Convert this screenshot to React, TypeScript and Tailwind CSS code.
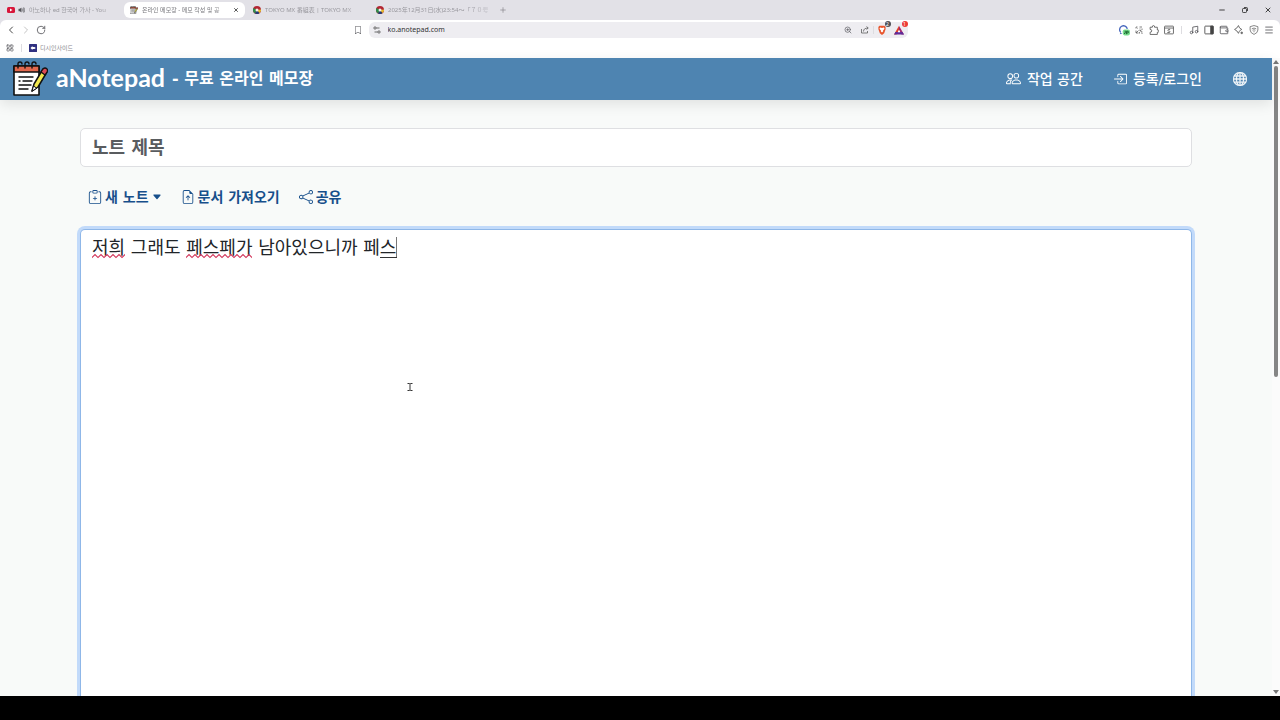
import type { ReactNode } from "react";
import {
  BsBoxArrowInRight,
  BsBookmark,
  BsCaretDownFill,
  BsClipboardPlus,
  BsFileEarmarkArrowUp,
  BsGlobe,
  BsPeople,
  BsShare,
  BsVolumeUpFill,
} from "react-icons/bs";
import {
  ChevronLeft,
  ChevronRight,
  LayoutGrid,
  Menu,
  Minus,
  Music,
  Plus,
  RotateCw,
  Wallet,
  X,
  ZoomIn,
} from "lucide-react";

function YouTubeIcon() {
  return (
    <svg viewBox="0 0 16 12" className="h-1.5 w-2 shrink-0">
      <rect width="16" height="12" rx="3" fill="#d8163a" />
      <path d="M6 3l5 3-5 3z" fill="#fff" />
    </svg>
  );
}

function TokyoIcon() {
  return (
    <svg viewBox="0 0 16 16" className="size-2 shrink-0">
      <circle cx="8" cy="8" r="8" fill="#b32734" />
      <path d="M8 8L1 4A8 8 0 0 0 4 15z" fill="#2c8b4b" />
      <path d="M8 8l-4 7a8 8 0 0 0 9-1z" fill="#1e3d78" />
      <path d="M8 8l5 6a8 8 0 0 0 3-7z" fill="#e4bb2c" />
      <circle cx="8" cy="8" r="3" fill="#f5f1e8" />
    </svg>
  );
}

function NotepadIcon({ className }: { className: string }) {
  return (
    <svg viewBox="0 0 36 36" className={className} fill="none" stroke="#111" strokeLinecap="round" strokeLinejoin="round">
      <path d="M2 5h25v29H2z" fill="#fff" strokeWidth="1.6" />
      <path d="M2 5h25v6H2z" fill="#e2684d" strokeWidth="1.6" />
      <path d="M6 7V3q0-2 2-2t2 2M13 7V3q0-2 2-2t2 2M20 7V3q0-2 2-2t2 2" strokeWidth="1.4" />
      <path d="M7 16h14M11 20h9M7 20h1M7 24h12M7 28h9" strokeWidth="1.4" />
      <path d="M20 30l2-7 9-15 4 3-9 15z" fill="#f3e94e" strokeWidth="1.5" />
      <path d="M29 11l2-3q2-2 4 0 1 1 0 3l-2 3z" fill="#de4a55" strokeWidth="1.3" />
      <path d="M20 30l1.500-5 3 2z" fill="#fff" strokeWidth="1" />
    </svg>
  );
}

function SiteControlsIcon() {
  return (
    <svg viewBox="0 0 16 16" className="size-2 shrink-0" fill="none" stroke="#555" strokeWidth="1.700">
      <circle cx="4" cy="4" r="2.300" />
      <path d="M6.500 4H13M3 12h6.500" />
      <circle cx="12" cy="12" r="2.300" />
    </svg>
  );
}

function ShareIcon() {
  return (
    <svg viewBox="0 0 16 16" className="size-2" fill="none" stroke="#555" strokeWidth="1.500">
      <path d="M1 6v8h12v-4M5 11q0-7 9-7M11 1l3.500 3L11 7" />
    </svg>
  );
}

function ShieldsIcon() {
  return (
    <svg viewBox="0 0 16 16" className="size-2.5">
      <path d="M4 1h8l2 2-.5 2 .5 1-2.500 7L8 16l-3.500-3L2 6l.5-1L2 3z" fill="#e8552d" />
      <path d="M5 4l3 .7L11 4l1 2-2.500 3 .5 1-2 2-2-2 .5-1L4 6z" fill="#fff" />
    </svg>
  );
}

function RewardsIcon() {
  return (
    <svg viewBox="0 0 16 16" className="size-2.5">
      <path d="M8 1L0 15h4l4-7z" fill="#e0402b" />
      <path d="M8 1l8 14h-4L8 8z" fill="#a12a72" />
      <path d="M0 15h16l-2.500-4H2.300z" fill="#5f2a98" />
      <path d="M8 8l-2 3.500h4z" fill="#fff" />
    </svg>
  );
}

function TranslateIcon() {
  return (
    <svg viewBox="0 0 20 20" className="size-3 shrink-0" fill="none">
      <path d="M4.500 14a6.500 6.500 0 1 1 11-6" stroke="#4566bd" strokeWidth="2.200" />
      <path d="M4 14l-1 3 4-1" fill="#4566bd" />
      <rect x="8" y="9" width="12" height="10" rx="3" fill="#7ae08e" />
      <path d="M12 11v4q0 1-2 1M14 17v-5h3v3h-3" stroke="#155c29" strokeWidth="1.500" />
    </svg>
  );
}

function QrIcon() {
  return (
    <svg viewBox="0 0 16 16" className="size-2" fill="none" stroke="#555" strokeWidth="1.500">
      <path d="M2 5V2h3M2 14l5-5M2 9v5h5M9 2h5M9 6h2M14 5v3M9 9h3v3h3M9 15v-3M5 5h1M13 15h2" />
    </svg>
  );
}

function ExtensionsIcon() {
  return (
    <svg viewBox="0 0 18 18" className="size-2.5" fill="none" stroke="#555" strokeWidth="1.500" strokeLinejoin="round">
      <path d="M2 4h4q-.5-3 2-3t2 3h5v5q3-.5 3 2t-3 2v4H2v-4q3 0 3-2.500T2 8z" />
    </svg>
  );
}

function ReaderIcon() {
  return (
    <svg viewBox="0 0 18 18" className="size-2.5" fill="none" stroke="#555" strokeWidth="1.500">
      <rect x="1" y="2" width="16" height="14" rx="1" />
      <path d="M1 5.500h16M11 8H8q-2 1.500 0 3h2q2 1.500 0 2.500H6" />
    </svg>
  );
}

function SidebarIcon() {
  return (
    <svg viewBox="0 0 18 18" className="size-2.5" fill="none" stroke="#444" strokeWidth="1.500">
      <rect x="1.500" y="2" width="15" height="14" rx="1" />
      <path d="M12 2h4.500v14H12z" fill="#444" />
    </svg>
  );
}

function AssistantIcon() {
  return (
    <svg viewBox="0 0 18 18" className="size-2.5" fill="none" stroke="#555" strokeWidth="1.500" strokeLinejoin="round">
      <path d="M8 1q1 5 6 7-3 1-4 3-1 1-2 4-2-5-7-7 5-2 7-7z" />
      <path d="M14 12l.7 1.500 1.500.7-1.500.7-.7 1.500-.7-1.500-1.500-.7 1.500-.7z" fill="#555" strokeWidth="1" />
    </svg>
  );
}

function VpnIcon() {
  return (
    <svg viewBox="0 0 18 18" className="size-2.5" fill="none" stroke="#666" strokeWidth="1.400">
      <path d="M9 1l7 2v6q0 5-7 8-7-3-7-8V3z" />
      <path d="M5 7q4-3 8 0M6.500 9.500q2.500-2 5 0M9 11v2" />
    </svg>
  );
}

function RestoreIcon() {
  return (
    <svg viewBox="0 0 12 12" className="size-1.5" fill="none" stroke="#222" strokeWidth="1.600">
      <rect x="1" y="3" width="8" height="8" rx="1.500" />
      <path d="M4 1h5q2 0 2 2v5" />
    </svg>
  );
}

function Tab({ icon, title, active, audible }: { icon: ReactNode; title: string; active?: boolean; audible?: boolean }) {
  return (
    <div
      role="tab"
      aria-selected={!!active}
      className={`flex h-4 w-[121px] shrink-0 items-center gap-1 rounded-md px-1.5 ${active ? "bg-white text-[#77777c]" : "text-[#99989e]"}`}
    >
      {icon}
      {audible && <BsVolumeUpFill className="-mx-px size-2 shrink-0 text-[#55555a]" />}
      <span className="flex-1 whitespace-nowrap [mask-image:linear-gradient(to_right,black_80%,#0005)]">{title}</span>
      {active && (
        <button aria-label="탭 닫기">
          <X className="size-1.5 text-[#222]" strokeWidth={3} />
        </button>
      )}
    </div>
  );
}

function IconButton({ label, children }: { label: string; children: ReactNode }) {
  return (
    <button aria-label={label} className="relative flex size-2.5 items-center justify-center text-[#55555a]">
      {children}
    </button>
  );
}

function BrowserChrome() {
  return (
    <div className="shrink-0 bg-[#e2e1e7] text-[6px] leading-3 font-['DejaVu_Sans','Noto_Sans_CJK_KR',sans-serif]">
      <div className="flex h-5 items-center justify-between pr-2 font-['Noto_Sans','Noto_Sans_CJK_KR',sans-serif]">
        <div className="flex items-center pl-px">
          <div role="tablist" className="mr-2 flex items-center gap-0.5">
            <Tab icon={<YouTubeIcon />} audible title="아노하나 ed 한국어 가사 - You" />
            <Tab active icon={<NotepadIcon className="size-2 shrink-0" />} title="온라인 메모장 - 메모 작성 및 공" />
            <Tab icon={<TokyoIcon />} title="TOKYO MX 番組表 | TOKYO MX" />
            <Tab icon={<TokyoIcon />} title="2025年12月31日(水)23:54～「７０号" />
          </div>
          <button aria-label="새 탭" className="text-[#85848a]"><Plus className="size-2" /></button>
        </div>
        <div className="flex items-center gap-[15px] text-[#222]">
          <button aria-label="최소화"><Minus className="size-2" strokeWidth={2.5} /></button>
          <button aria-label="이전 크기로" className="flex size-2 items-center justify-center"><RestoreIcon /></button>
          <button aria-label="닫기"><X className="size-2" strokeWidth={2.5} /></button>
        </div>
      </div>
      <div className="rounded-t-md bg-white font-['Noto_Sans','Noto_Sans_CJK_KR',sans-serif]">
        <div className="flex h-5 items-center justify-between px-1.5">
          <div className="flex flex-1 items-center gap-[5px]">
            <IconButton label="뒤로"><ChevronLeft className="size-3 shrink-0 text-[#333]" strokeWidth={1.8} /></IconButton>
            <IconButton label="앞으로"><ChevronRight className="size-3 shrink-0 text-[#bbb]" strokeWidth={1.8} /></IconButton>
            <IconButton label="새로고침"><RotateCw className="size-2.5" strokeWidth={2} /></IconButton>
          </div>
          <div className="mr-5 flex w-[555px] items-center gap-1.5">
            <IconButton label="북마크 추가"><BsBookmark className="size-2" /></IconButton>
            <div className="flex h-4 min-w-0 flex-1 items-center gap-[7px] rounded-md bg-[#eeedf1] px-1">
              <SiteControlsIcon />
              <input aria-label="주소" defaultValue="ko.anotepad.com" className="min-w-0 flex-1 bg-transparent text-[7px] text-[#333] outline-none" />
              <IconButton label="확대"><ZoomIn className="size-2" /></IconButton>
              <IconButton label="공유"><ShareIcon /></IconButton>
              <span className="-mx-1 h-2 w-px bg-[#dddce0]" />
              <IconButton label="보호 기능">
                <ShieldsIcon />
                <span className="absolute -top-1 -right-1 size-1.5 rounded-full bg-[#505057] text-center text-[5px] leading-[6px] text-white">2</span>
              </IconButton>
              <IconButton label="리워드">
                <RewardsIcon />
                <span className="absolute -top-1 -right-1 size-1.5 rounded-full bg-[#ed3b35] text-center text-[5px] leading-[6px] text-white">1</span>
              </IconButton>
            </div>
          </div>
          <div className="flex flex-1 items-center justify-end gap-[5px]">
            <IconButton label="번역"><TranslateIcon /></IconButton>
            <IconButton label="QR 코드"><QrIcon /></IconButton>
            <IconButton label="확장 프로그램"><ExtensionsIcon /></IconButton>
            <IconButton label="읽기 모드"><ReaderIcon /></IconButton>
            <span className="mx-[2px] h-2 w-px bg-[#dddce0]" />
            <IconButton label="음악"><Music className="size-2.5" /></IconButton>
            <IconButton label="사이드바"><SidebarIcon /></IconButton>
            <IconButton label="지갑"><Wallet className="size-2.5" /></IconButton>
            <IconButton label="AI 도우미"><AssistantIcon /></IconButton>
            <IconButton label="VPN"><VpnIcon /></IconButton>
            <IconButton label="메뉴"><Menu className="size-2.5 shrink-0" /></IconButton>
          </div>
        </div>
        <div className="flex h-[18px] items-center gap-[7px] px-1.5 pb-[3px] text-[#88878d]">
          <button aria-label="앱"><LayoutGrid className="size-2 text-[#55555a]" /></button>
          <span className="h-2 w-px bg-[#dddce0]" />
          <a href="#bookmark" className="flex items-center gap-[3px]">
            <svg viewBox="0 0 16 16" className="size-2">
              <rect width="16" height="16" rx="1" fill="#303181" />
              <path d="M3 8l4-4v2h3q3 0 3 2t-3 2H7v2z" fill="#fff" />
            </svg>
            디시인사이드
          </a>
        </div>
      </div>
    </div>
  );
}

function SiteHeader() {
  return (
    <header className="relative flex h-[42px] shrink-0 items-center justify-between bg-[#4e84b1] pr-6 pb-px pl-3 text-white shadow-[0_4px_14px_rgba(0,0,0,0.10)]">
      <a href="#home" className="flex items-center gap-2">
        <NotepadIcon className="size-9" />
        <h1 className="flex items-center gap-[7px] font-bold">
          <span className="pb-1 text-[25px] leading-8 font-['Lato',sans-serif]">aNotepad</span>
          <span className="text-[16px] leading-9">- 무료 온라인 메모장</span>
        </h1>
      </a>
      <nav className="flex items-center gap-[30px] text-[14px] leading-6 font-medium">
        <a href="#workspace" className="flex items-center gap-1.5"><BsPeople className="size-[15px]" />작업 공간</a>
        <a href="#login" className="flex items-center gap-1.5"><BsBoxArrowInRight className="size-[14px]" />등록/로그인</a>
        <button aria-label="언어" className="px-px"><BsGlobe className="size-[14px]" strokeWidth={0.4} /></button>
      </nav>
    </header>
  );
}

function Squiggle({ className }: { className: string }) {
  return (
    <span aria-hidden="true" className={`${className} pointer-events-none absolute top-6 h-1.5 overflow-hidden`}>
      <svg width="100%" height="6" fill="none" stroke="#d2365a" strokeWidth="1.200">
        <defs>
          <pattern id="wave" width="6" height="6" patternUnits="userSpaceOnUse">
            <path d="M-1 3.500L0 4.500 3 1.500l3 3 1-1" />
          </pattern>
        </defs>
        <rect width="100%" height="6" fill="url(#wave)" stroke="none" />
      </svg>
    </span>
  );
}

function Editor() {
  return (
    <main className="flex min-h-0 flex-1 flex-col overflow-hidden bg-[#f8faf9] px-20 pt-7">
      <input
        aria-label="노트 제목"
        placeholder="노트 제목"
        className="h-[39px] w-full shrink-0 rounded-[5px] border border-[#dedfe2] bg-white px-[11px] text-[18px] font-bold outline-none placeholder:text-[#595c5f]"
      />
      <div className="flex shrink-0 items-center gap-[19px] px-2 pt-[18px] pb-5 text-[14px] leading-6 font-bold text-[#174f8b]">
        <button className="flex items-center gap-[3px]">
          <BsClipboardPlus className="size-[14px]" />새 노트
          <BsCaretDownFill className="size-2.5" />
        </button>
        <button className="flex items-center gap-[3px]"><BsFileEarmarkArrowUp className="size-[14px]" />문서 가져오기</button>
        <button className="flex items-center gap-[3px]"><BsShare className="size-[14px]" />공유</button>
      </div>
      <div className="relative flex min-h-0 flex-1">
        <textarea
          aria-label="노트 내용"
          spellCheck={false}
          defaultValue="저희 그래도 페스페가 남아있으니까 페스"
          className="w-full resize-none rounded-t-[5px] border border-b-0 border-[#8fb7e8] bg-white px-[11px] py-1 text-[18px] leading-7 text-[#212529] ring-3 ring-[#c2dafa] outline-none"
        />
        <Squiggle className="left-3 w-[33px]" />
        <Squiggle className="left-[106px] w-[66px]" />
        <span className="pointer-events-none absolute top-7 left-[300px] h-px w-[17px] bg-[#333]" />
        <span className="pointer-events-none absolute top-2 left-[316px] h-5 w-px bg-[#777]" />
        <svg viewBox="0 0 8 10" className="pointer-events-none absolute top-[153px] left-[326px] h-2.5 w-2" fill="none" stroke="#333">
          <path d="M1.500 1.500h2L4 2l.5-.5h2M4 2v6M1.500 8.500h2L4 8l.5.5h2" />
        </svg>
      </div>
    </main>
  );
}

export default function App() {
  return (
    <div className="flex h-screen flex-col overflow-hidden bg-black font-['DejaVu_Sans','Noto_Sans_CJK_KR',sans-serif]">
      <BrowserChrome />
      <div className="flex min-h-0 flex-1 bg-[#fbfbfb]">
        <div className="flex min-w-0 flex-1 flex-col">
          <SiteHeader />
          <Editor />
        </div>
        <div aria-hidden="true" className="flex w-2 shrink-0 flex-col items-center justify-between py-0.5">
          <svg viewBox="0 0 6 4" className="h-1 w-1.5 shrink-0" fill="#777"><path d="M3 0l3 4H0z" /></svg>
          <div className="mt-0.5 mb-auto h-[49%] w-1 rounded-full bg-[#858585]" />
          <svg viewBox="0 0 6 4" className="h-1 w-1.5 shrink-0" fill="#777"><path d="M3 4l3-4H0z" /></svg>
        </div>
      </div>
      <div className="h-6 shrink-0 bg-black" />
    </div>
  );
}
